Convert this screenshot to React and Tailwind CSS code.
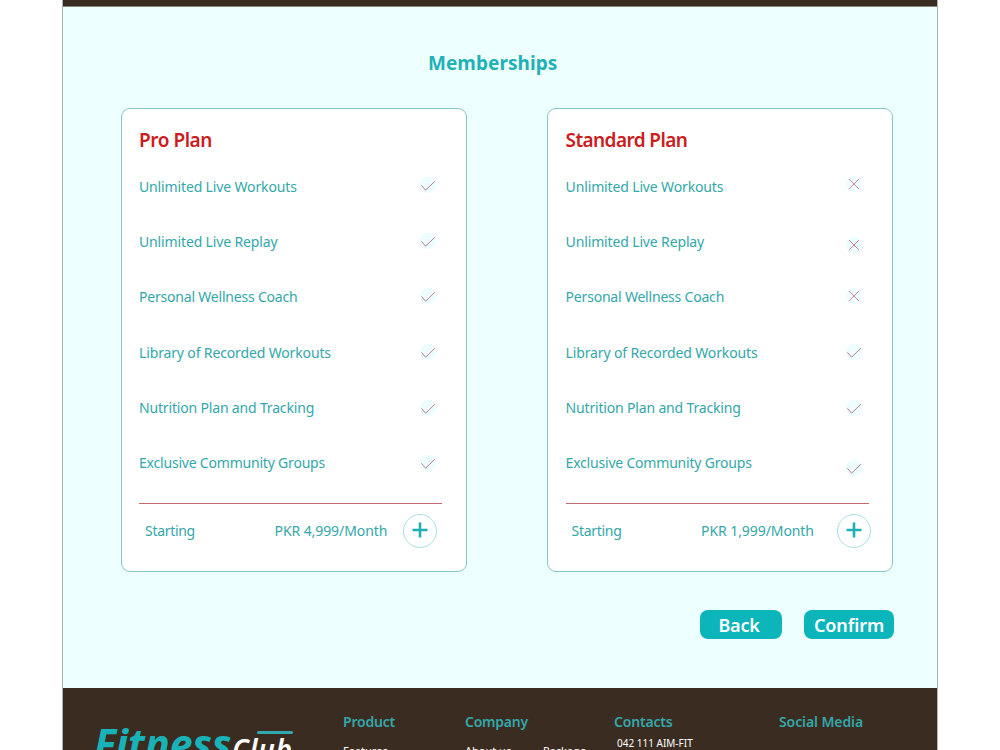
import React from 'react';
import clsx from 'clsx';

const plans = [
  {
    name: 'Pro Plan',
    price: 'PKR 4,999/Month',
    cardClass: 'pl-[17px]',
    nameClass: 'tracking-[-0.45px]',
    addClass: 'ml-[15.4px]',
    features: [
      { label: 'Unlimited Live Workouts', ok: true, pos: 'mt-[16.5px]', track: 'tracking-[-0.14px]' },
      { label: 'Unlimited Live Replay', ok: true, pos: 'mt-[17.5px]', track: 'tracking-[-0.14px]' },
      { label: 'Personal Wellness Coach', ok: true, pos: 'mt-[18px]', track: 'tracking-[-0.2px]' },
      { label: 'Library of Recorded Workouts', ok: true, pos: 'mt-[18.5px]', track: 'tracking-[-0.14px]' },
      { label: 'Nutrition Plan and Tracking', ok: true, pos: 'mt-[19px]', track: 'tracking-[-0.17px]' },
      { label: 'Exclusive Community Groups', ok: true, pos: 'mt-[19.5px]', track: 'tracking-[-0.2px]' },
    ],
  },
  {
    name: 'Standard Plan',
    price: 'PKR 1,999/Month',
    cardClass: 'pl-[17.6px]',
    nameClass: 'tracking-[-0.6px]',
    addClass: 'ml-[22.6px]',
    features: [
      { label: 'Unlimited Live Workouts', ok: false, pos: 'mt-[16px]', track: 'tracking-[-0.14px]' },
      { label: 'Unlimited Live Replay', ok: false, pos: 'mt-[21.5px]', track: 'tracking-[-0.14px]' },
      { label: 'Personal Wellness Coach', ok: false, pos: 'mt-[17.5px]', track: 'tracking-[-0.2px]' },
      { label: 'Library of Recorded Workouts', ok: true, pos: 'mt-[18.5px]', track: 'tracking-[-0.14px]' },
      { label: 'Nutrition Plan and Tracking', ok: true, pos: 'mt-[19px]', track: 'tracking-[-0.17px]' },
      { label: 'Exclusive Community Groups', ok: true, pos: 'mt-[24px]', track: 'tracking-[-0.2px]' },
    ],
  },
];

function Mark({ ok, pos }) {
  return (
    <svg viewBox="0 0 18 18" className={clsx('h-[18px] w-[18px] shrink-0', pos)} fill="none">
      <circle cx="9" cy="9" r="8.2" fill="#edfdff" />
      {ok ? (
        <path d="M2.4 9.3 L6.6 14.2 L16 5.1" stroke="#b8717f" strokeWidth="0.9" />
      ) : (
        <path d="M4.2 4.2 L13.8 13.8 M13.8 4.2 L4.2 13.8" stroke="#d0757f" strokeWidth="0.9" />
      )}
    </svg>
  );
}

function PlanCard({ plan }) {
  return (
    <div className={clsx('h-[464px] w-[346px] rounded-[9px] border border-[#86c6ca] bg-white pr-[23px]', plan.cardClass)}>
      <h2 className="mt-[17px] h-[28px] text-[19px] leading-[28px] font-semibold text-[#cb1d20]">
        <span className={clsx('whitespace-nowrap', plan.nameClass)}>{plan.name}</span>
      </h2>

      {/* FEATURES */}
      <ul className="mt-[5px]">
        {plan.features.map((f) => (
          <li key={f.label} className="flex h-[55.2px] items-start justify-between pr-[6px]">
            <span className={clsx('text-[14px] leading-[55px] whitespace-nowrap', f.track)}>{f.label}</span>
            <Mark ok={f.ok} pos={f.pos} />
          </li>
        ))}
      </ul>

      {/* PRICE */}
      <div className="mt-[12.8px] flex h-[55px] w-[303px] items-center border-t border-t-[#c4696d] pl-[6px] text-[14px]">
        <span className="w-[129.5px] shrink-0 tracking-[-0.3px] whitespace-nowrap">Starting</span>
        <span className="w-[113px] shrink-0 tracking-[-0.08px] whitespace-nowrap">{plan.price}</span>
        <button className={clsx('flex h-[34px] w-[34px] shrink-0 items-center justify-center rounded-full border border-[#abdfe3]', plan.addClass)}>
          <svg viewBox="0 0 16 16" className="-mt-px h-4 w-4" stroke="#1fb0b3" strokeWidth="2.6">
            <path d="M8 0.5 V15.5 M0.5 8 H15.5" />
          </svg>
        </button>
      </div>
    </div>
  );
}

export default function App() {
  return (
    <div className="h-[750px] w-[1000px] overflow-hidden bg-white font-['Noto_Sans','Open_Sans',sans-serif] text-[#33a7a9]">
      <div className="mx-auto flex h-[750px] w-[876px] flex-col border-x border-[#a9b3b3] bg-[#edffff]">
        <div className="h-[7px] shrink-0 border-b border-[#8a8480] bg-[#3b2c21]" />

        <h1 className="mt-[40px] h-[32px] pl-[365px] text-[19px] leading-[32px] font-bold text-[#1fb1b5]">
          <span className="tracking-[0.05px]">Memberships</span>
        </h1>

        <div className="mt-[29px] ml-[58px] flex gap-[80px]">
          {plans.map((p) => (
            <PlanCard key={p.name} plan={p} />
          ))}
        </div>

        {/* ACTIONS */}
        <div className="mt-[38px] flex justify-end gap-[22px] pr-[43px] text-[18px] font-semibold text-white">
          <button className="h-[28.5px] w-[82px] rounded-[8px] bg-[#0cb5ba] pr-[4px] leading-[30px] tracking-[-0.2px]">Back</button>
          <button className="h-[28.5px] w-[90px] rounded-[8px] bg-[#0cb5ba] leading-[30px] tracking-[-0.1px]">Confirm</button>
        </div>

        {/* FOOTER */}
        <footer className="mt-[49.5px] flex h-[62px] shrink-0 overflow-hidden bg-[#3b2c21] text-[14px] font-semibold">
          <div className="flex w-[280px] pt-[29px] pl-[31px] italic">
            <span className="w-[138px] text-[41px] leading-[52px] font-bold text-[#18b3b8]">Fitness</span>
            <div className="flex flex-col pt-[14px]">
              <div className="ml-[25px] h-[2.5px] w-[36px] shrink-0 rounded-full bg-[#2fa9ab]" />
              <span className="text-[28px] leading-[31px] font-semibold tracking-[0.7px] text-white">Club</span>
            </div>
          </div>
          <div className="w-[122px] pt-[24px]">
            <h3 className="leading-[20px] tracking-[-0.2px]">Product</h3>
            <p className="mt-[11px] text-[11px] leading-[16px] font-normal text-white">Features</p>
          </div>
          <div className="w-[149px] pt-[24px]">
            <h3 className="leading-[20px] tracking-[-0.25px]">Company</h3>
            <div className="mt-[11px] flex text-[11px] leading-[16px] font-normal text-white">
              <span className="w-[78px]">About us</span>
              <span>Package</span>
            </div>
          </div>
          <div className="w-[165px] pt-[24px]">
            <h3 className="leading-[20px] tracking-[-0.2px]">Contacts</h3>
            <p className="mt-[3px] pl-[3px] text-[10px] leading-[16px] font-normal text-white">042 111 AIM-FIT</p>
          </div>
          <div className="pt-[24px]">
            <h3 className="leading-[20px] tracking-[-0.1px] whitespace-nowrap">Social Media</h3>
          </div>
        </footer>
      </div>
    </div>
  );
}
